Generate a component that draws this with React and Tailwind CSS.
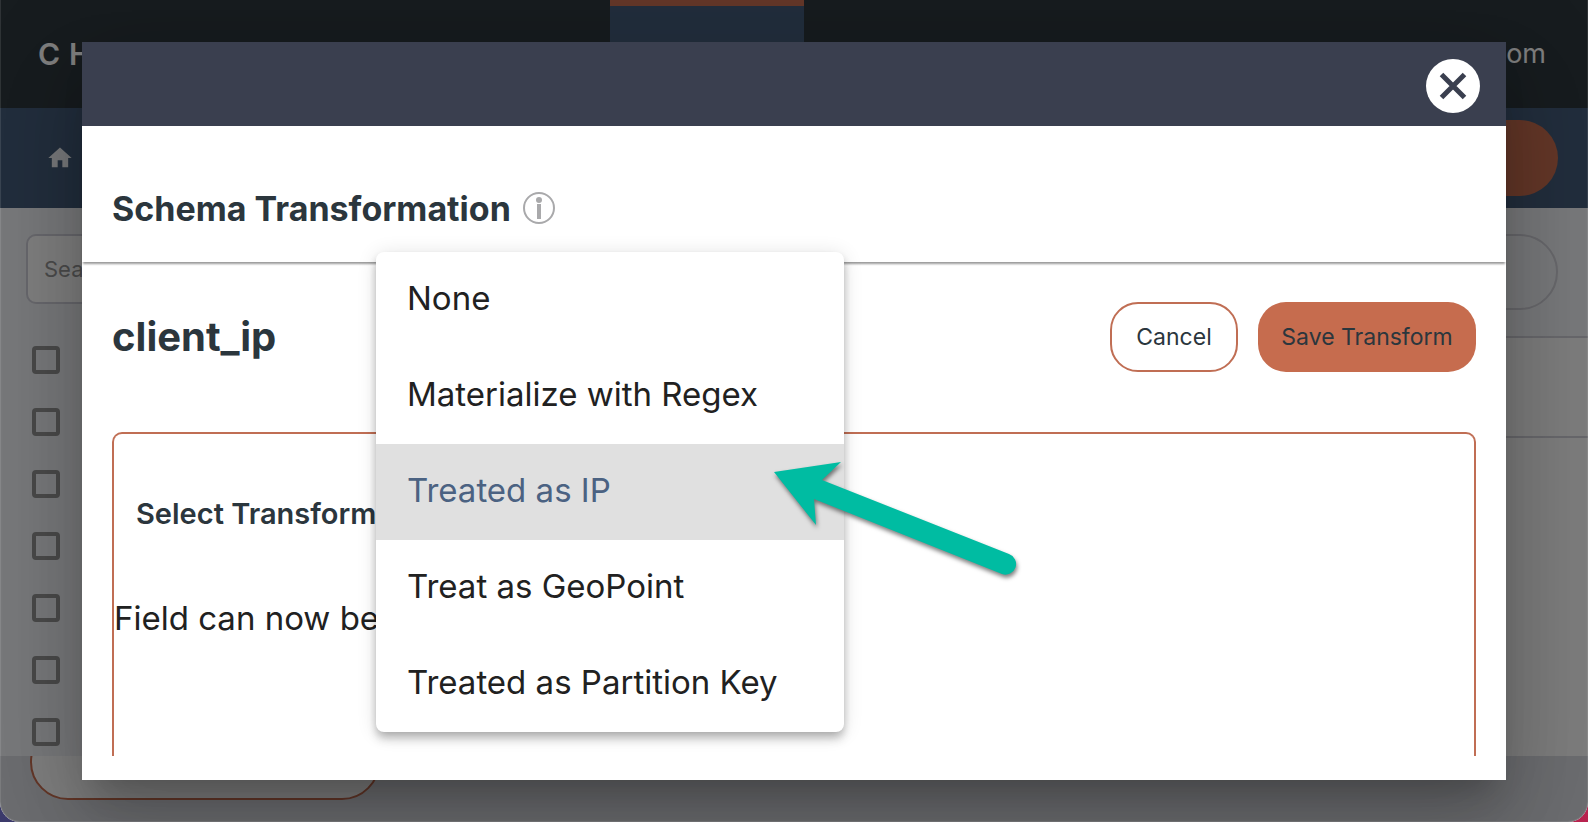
// src/App.jsx
import React, { useState } from 'react';

const OPTIONS = [
  'None',
  'Materialize with Regex',
  'Treated as IP',
  'Treat as GeoPoint',
  'Treated as Partition Key',
];

const ROWS = [1, 2, 3, 4, 5, 6, 7];

const HomeIcon = () => (
  <svg viewBox="0 0 24 24" className="w-7 h-7 fill-[#f1f3f6]">
    <path d="M10 20v-6h4v6h5v-8h3L12 3 2 12h3v8z" />
  </svg>
);

const InfoIcon = () => (
  <svg viewBox="0 0 32 32" className="w-8 h-8" fill="#a9a9ab">
    <circle cx="16" cy="16" r="15" fill="none" stroke="#a9a9ab" strokeWidth="2" />
    <circle cx="16" cy="8" r="3" />
    <path d="M14 12h4v15h-4z" />
  </svg>
);

const CloseIcon = () => (
  <svg viewBox="0 0 54 54" className="w-[54px] h-[54px]">
    <circle cx="27" cy="27" r="27" fill="#fff" />
    <path d="M15.5 15.5l23 23M38.5 15.5l-23 23" stroke="#3a3f4f" strokeWidth="5" />
  </svg>
);

const Arrow = () => (
  <svg
    viewBox="0 0 262 140"
    className="absolute left-[388px] top-[200px] w-[262px] h-[140px] pointer-events-none drop-shadow-[1px_3px_2px_rgba(0,0,0,0.5)]"
  >
    <path
      d="M10 20L77 10L58 28L245 102A10 10 0 0 1 238 122L50 47L52 73Z"
      fill="#00bca2"
    />
  </svg>
);

const Background = () => (
  <div className="h-full flex flex-col bg-[#f1f3f6]">
    <header className="h-[108px] shrink-0 flex items-center pl-[38px] pr-[42px] bg-[#2e393f]">
      <span className="w-[572px] shrink-0 text-[30px] font-semibold tracking-[0.3em] text-white">CHAOS</span>
      <div className="w-[194px] h-full shrink-0 border-t-6 border-[#c86e50] bg-[#455d7a]" />
      <span className="flex-1 text-right text-[27px] text-white">.com</span>
    </header>

    <nav className="h-[100px] shrink-0 flex items-center justify-between pl-[46px] pr-[30px] bg-[#455d7a]">
      <a href="#home" aria-label="Home"><HomeIcon /></a>
      <button aria-label="Create" className="w-[240px] h-[76px] rounded-full bg-[#c86e50]" />
    </nav>

    <main className="flex-1 min-h-0 flex justify-between overflow-hidden">
      <div className="w-[400px] pl-[26px] pt-[26px]">
        <input
          aria-label="Search"
          placeholder="Search"
          className="w-full h-[70px] px-4 rounded-[10px] border-2 border-[#d0d0da] bg-white text-[22px] placeholder:text-[#999]"
        />
        <div className="mt-[42px] pl-[6px] flex flex-col gap-[34px]">
          {ROWS.map((row) => (
            <input
              key={row}
              type="checkbox"
              aria-label={`Row ${row}`}
              className="appearance-none w-7 h-7 shrink-0 rounded-[4px] border-4 border-[#949494]"
            />
          ))}
        </div>
      </div>
      <div className="w-[400px] pt-[26px] flex flex-col">
        <button aria-label="Filter" className="self-end mr-[30px] w-[240px] h-[76px] shrink-0 rounded-full border-2 border-[#d0d0d8]" />
        <div className="mt-[26px] h-[102px] shrink-0 border-y-2 border-[#d0d0d8] bg-[#fafafa]" />
        <div className="flex-1 bg-[#fafafa]" />
      </div>
    </main>

    <footer className="h-[66px] shrink-0 pl-[30px] overflow-hidden bg-[#d9dae0]">
      <button aria-label="Add" className="-mt-8 block w-[350px] h-[76px] rounded-full border-2 border-[#c86e50] bg-white" />
    </footer>
  </div>
);

const TransformMenu = ({ value, onChange }) => (
  <div className="absolute left-[294px] top-[210px] w-[468px]">
    <div
      role="listbox"
      aria-label="Select Transform"
      className="rounded-[8px] overflow-hidden bg-white shadow-[0_4px_8px_-2px_rgba(0,0,0,0.2),0_8px_10px_rgba(0,0,0,0.14),0_2px_20px_rgba(0,0,0,0.12)]"
    >
      {OPTIONS.map((option) => (
        <button
          key={option}
          role="option"
          aria-selected={option === value}
          onClick={() => onChange(option)}
          className={`block w-full h-24 px-[31px] pb-[2px] text-left text-[33px] ${
            option === value ? 'bg-[#e0e0e0] text-[#4b6282]' : 'text-[#212121]'
          }`}
        >
          {option}
        </button>
      ))}
    </div>
    <Arrow />
  </div>
);

const TransformModal = () => {
  const [transform, setTransform] = useState('Treated as IP');

  return (
    <div
      role="dialog"
      aria-label="Schema Transformation"
      className="relative h-full flex flex-col bg-white shadow-[0_22px_30px_-14px_rgba(0,0,0,0.2),0_48px_76px_6px_rgba(0,0,0,0.14),0_18px_92px_16px_rgba(0,0,0,0.12)]"
    >
      <div className="h-[84px] shrink-0 flex items-center justify-end pr-[26px] pt-1 bg-[#3a3f4f]">
        <button aria-label="Close"><CloseIcon /></button>
      </div>

      <div className="h-[136px] shrink-0 flex items-center gap-3 px-[30px] pt-7 shadow-[0_3px_2px_-1px_rgba(0,0,0,0.4)]">
        <h1 className="text-[34px] font-bold text-[#2b363d]">Schema Transformation</h1>
        <InfoIcon />
      </div>

      <div className="flex-1 min-h-0 mb-6 px-[30px] pt-10 flex flex-col overflow-hidden">
        <div className="flex items-center justify-between">
          <h2 className="text-[40px] leading-[54px] font-bold text-[#2b363d]">client_ip</h2>
          <div className="flex gap-5 text-[23px] text-[#2b363d]">
            <button className="w-32 h-[70px] rounded-[28px] border-2 border-[#c06e54] bg-white">Cancel</button>
            <button className="w-[218px] h-[70px] rounded-[28px] bg-[#c66c4e]">Save Transform</button>
          </div>
        </div>

        <div className="mt-[60px] flex-1 shrink-0 rounded-t-[10px] border-2 border-b-0 border-[#c06e54]">
          <h3 className="pl-[22px] pt-[60px] text-[29px] leading-10 font-semibold text-[#2b363d]">Select Transform</h3>
          <p className="pt-[60px] text-[33px] leading-[48px] text-[#212121]">Field can now be</p>
        </div>
      </div>

      <TransformMenu value={transform} onChange={setTransform} />
    </div>
  );
};

const App = () => (
  <div className="h-screen bg-linear-to-r from-[#3b3a6b] to-[#b8234f] font-[Inter,sans-serif]">
    <div className="relative h-full rounded-b-[20px] overflow-hidden">
      <Background />
      <div className="absolute inset-0 px-[82px] py-[42px] bg-black/50">
        <TransformModal />
      </div>
      <div className="absolute inset-0 rounded-b-[20px] border border-t-0 border-white/10 pointer-events-none" />
    </div>
  </div>
);

export default App;
